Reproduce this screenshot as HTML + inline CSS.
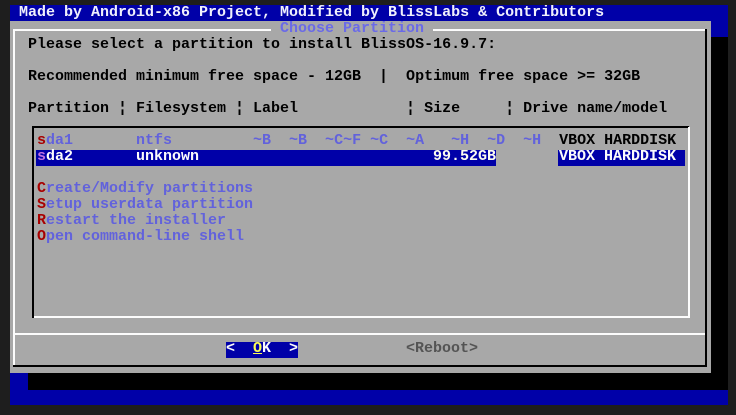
<!DOCTYPE html>
<html><head><meta charset="utf-8"><style>
html,body{margin:0;padding:0;width:736px;height:415px;background:#1e1e1e;overflow:hidden}
.a{position:absolute}
.t{position:absolute;white-space:pre;font-family:"Liberation Mono","DejaVu Sans Mono",monospace;font-size:15px;line-height:16px;height:16px;font-weight:bold;color:#000;letter-spacing:0}
.lb{color:#6262dc}
.r{color:#a80000}
</style></head><body>
<div class="a" style="left:10px;top:5px;width:718px;height:400px;background:#0000a8"></div>
<div class="a" style="left:28px;top:373px;width:700px;height:17px;background:#000"></div>
<div class="a" style="left:711px;top:37px;width:17px;height:353px;background:#000"></div>
<div class="a" style="left:10px;top:21px;width:701px;height:352px;background:#a8a8a8"></div>
<!-- dialog borders -->
<div class="a" style="left:13px;top:29px;width:693px;height:2px;background:#fcfcfc"></div>
<div class="a" style="left:13px;top:29px;width:2px;height:337px;background:#fcfcfc"></div>
<div class="a" style="left:13px;top:365px;width:694px;height:2px;background:#000"></div>
<div class="a" style="left:705px;top:29px;width:2px;height:338px;background:#000"></div>
<div class="a" style="left:15px;top:333px;width:690px;height:2px;background:#fcfcfc"></div>
<!-- list box -->
<div class="a" style="left:32px;top:126px;width:657px;height:2px;background:#000"></div>
<div class="a" style="left:32px;top:126px;width:2px;height:192px;background:#000"></div>
<div class="a" style="left:34px;top:316px;width:656px;height:2px;background:#fcfcfc"></div>
<div class="a" style="left:688px;top:127px;width:2px;height:191px;background:#fcfcfc"></div>

<div class="t" style="left:19px;top:5px;color:#f0f0fc">Made by Android-x86 Project, Modified by BlissLabs &amp; Contributors</div>
<div class="t" style="left:271px;top:21px;background:#a8a8a8;color:#6a6ae8"> Choose Partition </div>
<div class="t" style="left:28px;top:37px">Please select a partition to install BlissOS-16.9.7:</div>
<div class="t" style="left:28px;top:69px">Recommended minimum free space - 12GB  |  Optimum free space &gt;= 32GB</div>
<div class="t" style="left:28px;top:101px">Partition ¦ Filesystem ¦ Label            ¦ Size     ¦ Drive name/model</div>

<div class="t lb" style="left:37px;top:133px"><span class="r">s</span>da1       ntfs         ~B  ~B  ~C~F ~C  ~A   ~H  ~D  ~H  <span style="color:#000">VBOX HARDDISK</span></div>
<div class="a" style="left:36px;top:150px;width:460px;height:16px;background:#0000a8"></div>
<div class="a" style="left:558px;top:150px;width:127px;height:16px;background:#0000a8"></div>
<div class="t" style="left:37px;top:149px;color:#fcfcfc"><span style="color:#c070e0">s</span>da2</div>
<div class="t" style="left:136px;top:149px;color:#fcfcfc">unknown</div>
<div class="t" style="left:433px;top:149px;color:#fcfcf0">99.52GB</div>
<div class="t" style="left:559px;top:149px;color:#fcfcfc">VBOX HARDDISK</div>

<div class="t lb" style="left:37px;top:181px"><span class="r">C</span>reate/Modify partitions</div>
<div class="t lb" style="left:37px;top:197px"><span class="r">S</span>etup userdata partition</div>
<div class="t lb" style="left:37px;top:213px"><span class="r">R</span>estart the installer</div>
<div class="t lb" style="left:37px;top:229px"><span class="r">O</span>pen command-line shell</div>

<div class="a" style="left:226px;top:342px;width:72px;height:16px;background:#0000a8"></div>
<div class="t" style="left:226px;top:341px;color:#fcfcfc">&lt;  <span style="color:#fcfc54;text-decoration:underline">O</span>K  &gt;</div>
<div class="t" style="left:406px;top:341px;color:#545454">&lt;Reboot&gt;</div>
</body></html>
